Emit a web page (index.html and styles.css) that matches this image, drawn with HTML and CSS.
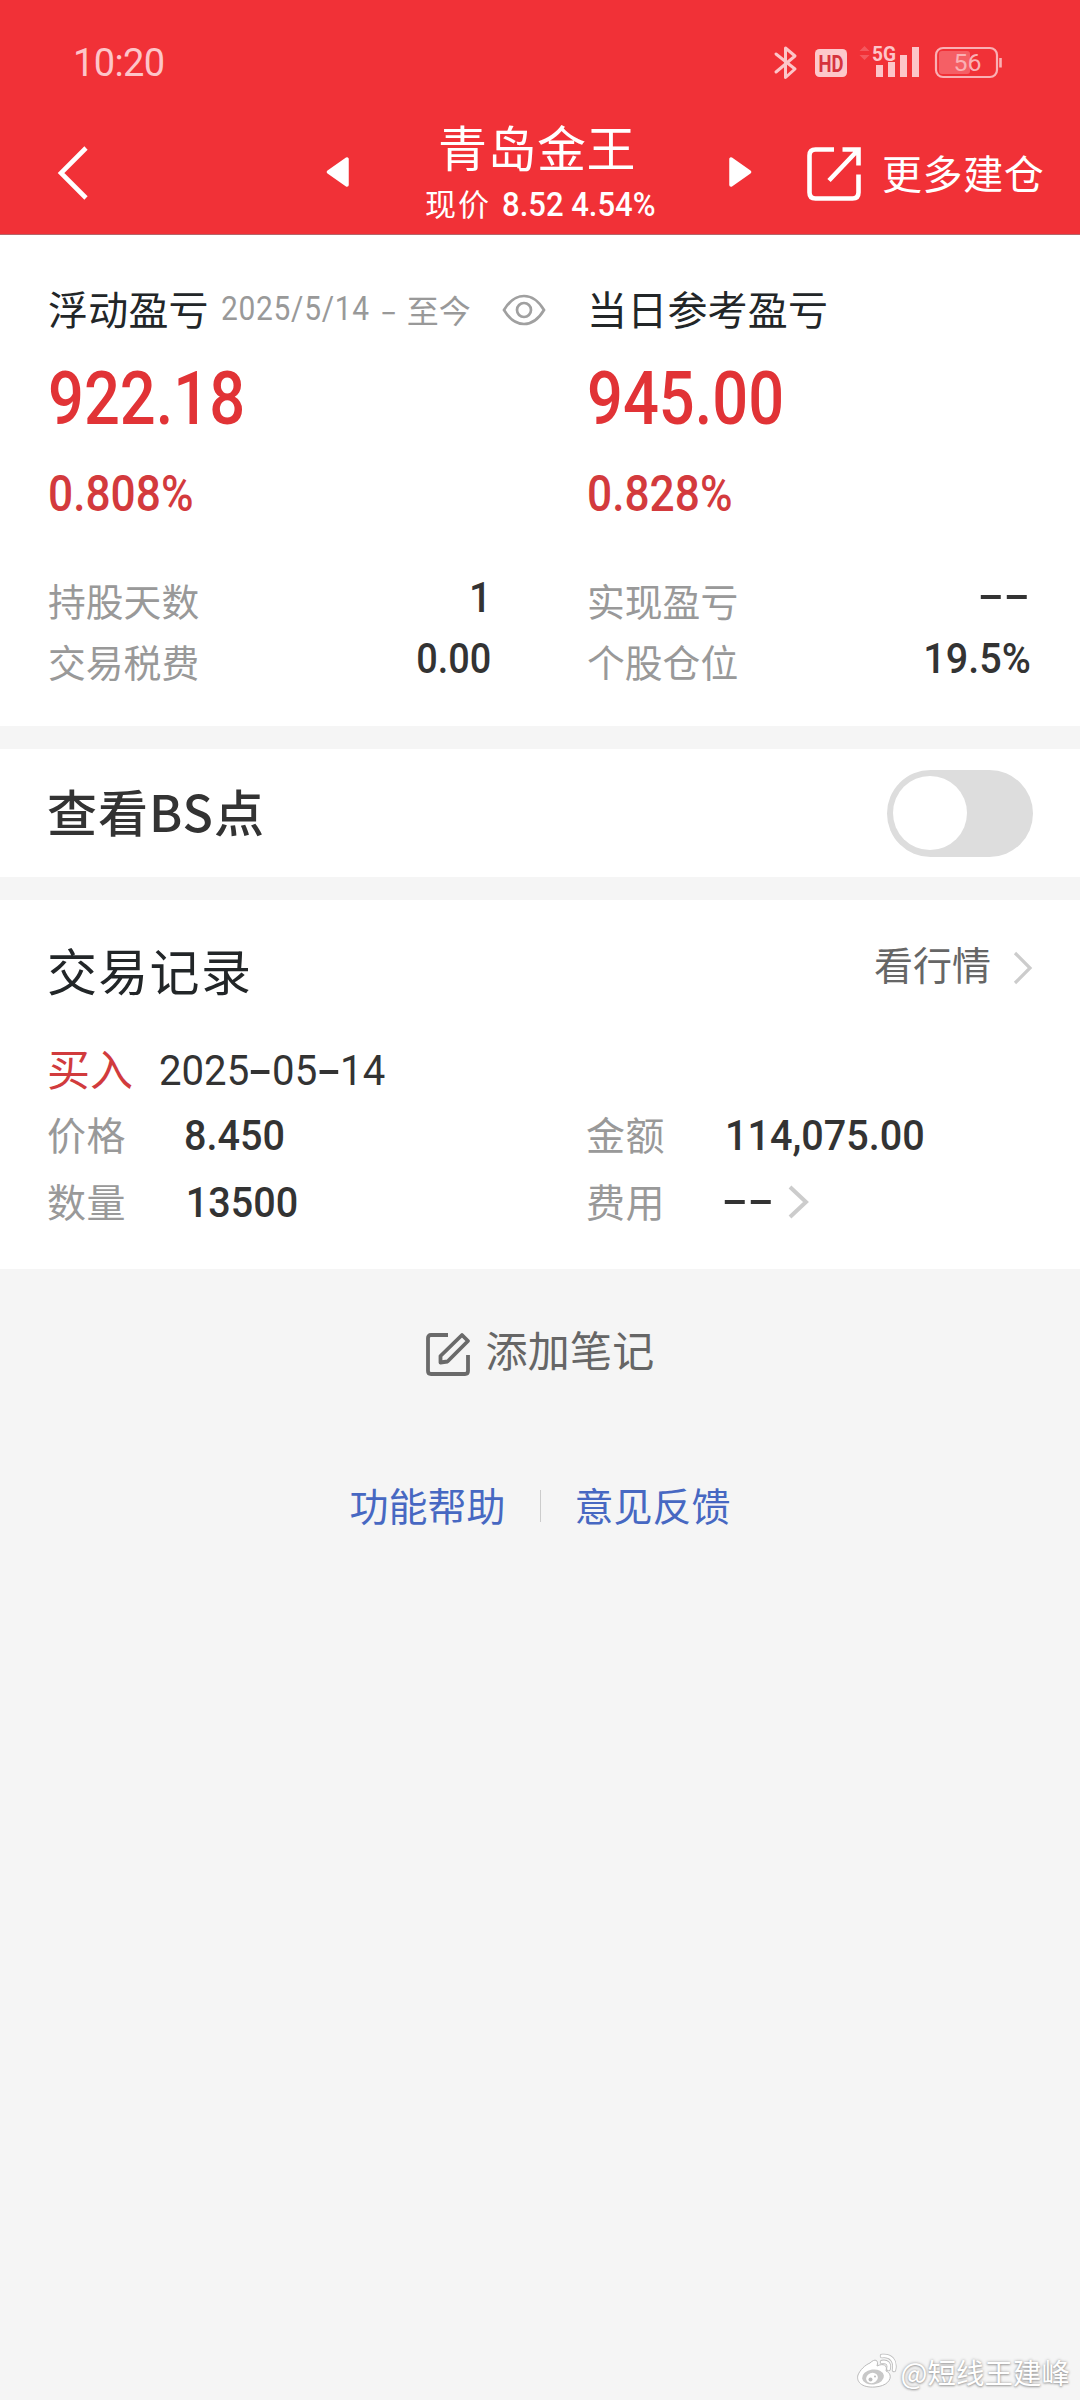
FILE: index.html
```html
<!DOCTYPE html>
<html lang="zh-CN">
<head>
<meta charset="utf-8">
<title>青岛金王</title>
<link rel="stylesheet" href="styles.css">
</head>
<body>
<main class="page">
  <header class="top">
    <div class="status">
      <span class="clock">10:20</span>
      <svg class="status-icons" width="240" height="44" viewBox="770 40 240 44">
        <path d="M776 54 L795 69 L785.5 77.500 V48 L795 56 L776 72" fill="none" stroke="#fcc6c9" stroke-width="3" stroke-linejoin="round" stroke-linecap="round"/>
        <rect x="815" y="49" width="32" height="28" rx="4.500" fill="#fdc8cb"/>
        <text class="hd" x="831" y="71.500" text-anchor="middle" textLength="25" lengthAdjust="spacingAndGlyphs">HD</text>
        <path d="M859.500 51 L864.500 46 L869.500 51 Z M859.500 55 L864.500 60 L869.500 55 Z" fill="#f4585e"/>
        <text class="net" x="872" y="60.500" textLength="24" lengthAdjust="spacingAndGlyphs">5G</text>
        <path d="M876 65h7v12h-7z M888 62h7v15h-7z M900 55h7v22h-7z M912 47h7v30h-7z" fill="#fdc5c9"/>
        <rect x="939" y="51" width="31" height="23" rx="3" fill="#f55f65"/>
        <rect x="936" y="48" width="61" height="29" rx="7" fill="none" stroke="#fab0b4" stroke-width="2.200"/>
        <path d="M1000.500 58v9.500" stroke="#fab0b4" stroke-width="2.600"/>
        <text class="battery" x="967.500" y="71" text-anchor="middle" textLength="28" lengthAdjust="spacingAndGlyphs">56</text>
      </svg>
    </div>
    <nav class="nav">
      <svg class="back" width="34" height="56" viewBox="0 0 34 56"><path d="M30 3 L5 28 L30 53" fill="none" stroke="#fff" stroke-width="4.600"/></svg>
      <svg class="prev" width="24" height="30" viewBox="0 0 24 30"><path d="M21 2 V28 L2.500 15 Z" fill="#fff" stroke="#fff" stroke-width="3.500" stroke-linejoin="round"/></svg>
      <div class="stock">
        <h1 class="stock-name">青岛金王</h1>
        <p class="quote"><span>现价</span><span class="num quote-num">8.52 4.54%</span></p>
      </div>
      <svg class="next" width="24" height="30" viewBox="0 0 24 30"><path d="M3 2 V28 L21.500 15 Z" fill="#fff" stroke="#fff" stroke-width="3.500" stroke-linejoin="round"/></svg>
      <a class="more">
        <svg width="54" height="56" viewBox="0 0 54 56" fill="none" stroke="#fff" stroke-width="4.600"><path d="M27 3.500 H8.500 Q2.500 3.500 2.500 9.500 V46.500 Q2.500 52.500 8.500 52.500 H45.500 Q51.500 52.500 51.500 46.500 V28.500 M35.500 3.500 H51.500 V19.500 M51 4 L22 34.500"/></svg>
        <span>更多建仓</span>
      </a>
    </nav>
  </header>

  <section class="card summary">
    <div class="col">
      <div class="heading">
        <span>浮动盈亏</span>
        <span class="range"><span class="num range-date">2025/5/14</span><i class="range-dash">-</i><span>至今</span></span>
        <svg class="eye" width="44" height="32" viewBox="0 0 44 32" fill="none" stroke="#a0a0a0" stroke-width="2.700"><path d="M2 16 C8 6 14 2 22 2 S36 6 42 16 C36 26 30 30 22 30 S8 26 2 16 Z"/><circle cx="22" cy="16" r="7"/></svg>
      </div>
      <div class="big num">922.18</div>
      <div class="percent num">0.808%</div>
      <div class="row"><span>持股天数</span><span class="value num">1</span></div>
      <div class="row"><span>交易税费</span><span class="value num s88">0.00</span></div>
    </div>
    <div class="col">
      <div class="heading"><span>当日参考盈亏</span></div>
      <div class="big num">945.00</div>
      <div class="percent num">0.828%</div>
      <div class="row"><span>实现盈亏</span><span class="value none"><i>-</i><i>-</i></span></div>
      <div class="row"><span>个股仓位</span><span class="value num">19.5%</span></div>
    </div>
  </section>

  <section class="card bs">
    <h2>查看BS点</h2>
    <span class="toggle"><span class="knob"></span></span>
  </section>

  <section class="card records">
    <div class="records-head">
      <h2>交易记录</h2>
      <a class="market"><span>看行情</span><svg width="20" height="34" viewBox="0 0 20 34"><path d="M2 2 L17 17 L2 32" fill="none" stroke="#ccc" stroke-width="3.200"/></svg></a>
    </div>
    <div class="trade"><span class="buy">买入</span><span class="date num">2025<i>-</i>05<i>-</i>14</span></div>
    <div class="details">
      <span>价格</span><span class="num detail">8.450</span>
      <span>金额</span><span class="num detail">114,075.00</span>
      <span>数量</span><span class="num detail quantity">13500</span>
      <span>费用</span><span class="fee"><span class="none"><i>-</i><i>-</i></span><svg width="22" height="34" viewBox="0 0 22 34"><path d="M2 2 L18 17 L2 32" fill="none" stroke="#ccc" stroke-width="4"/></svg></span>
    </div>
  </section>

  <a class="note">
    <svg width="46" height="46" viewBox="0 0 46 46" fill="none" stroke="#6a6a6a" stroke-width="3.800"><path d="M23 3 H6 Q3 3 3 6 V39 Q3 42 6 42 H40 Q43 42 43 39 V23"/><path d="M15.500 30.500 V24 L37 3 L43 9 L22.500 29.500 Z" stroke-linejoin="round"/></svg>
    <span>添加笔记</span>
  </a>
  <footer class="links"><a>功能帮助</a><span class="divider"></span><a>意见反馈</a></footer>

  <div class="watermark">
    <svg width="42" height="38" viewBox="0 0 42 38">
      <path d="M14 10 C19 5 23 7 21 13 C27 10 32 12 30 18 C38 21 35 33 19 34 C5 35 0 28 2 22 C4 17 9 12 14 10 Z" fill="#fff" stroke="#bbb"/>
      <ellipse cx="17" cy="24" rx="11" ry="7.500" fill="#c8c8c8" transform="rotate(-8 17 24)"/>
      <ellipse cx="16" cy="25" rx="6" ry="5" fill="#fff" transform="rotate(-20 16 25)"/>
      <circle cx="14.500" cy="26.500" r="2" fill="#bbb"/><circle cx="19" cy="23.500" r="1" fill="#bbb"/>
      <path d="M26 3 C35 2 40 8 38 17 M26 9 C31 8 34 11 32.500 16" fill="none" stroke="#bbb" stroke-width="4.400" stroke-linecap="round"/>
      <path d="M26 3 C35 2 40 8 38 17 M26 9 C31 8 34 11 32.500 16" fill="none" stroke="#fff" stroke-width="2.800" stroke-linecap="round"/>
    </svg>
    <span>@短线王建峰</span>
  </div>
</main>
</body>
</html>
```
FILE: styles.css
```css
* { box-sizing: border-box; margin: 0; padding: 0; }
body { background: #f5f5f5; }
i { font-style: normal; }
svg { display: block; flex: none; }
h1, h2 { font-weight: 400; }

.page {
  position: relative;
  display: flex;
  flex-direction: column;
  width: 1080px;
  height: 2400px;
  overflow: hidden;
  background: #f5f5f5;
  font-family: "Noto Sans CJK SC", sans-serif;
  color: #333;
  white-space: nowrap;
}
.num {
  display: inline-block;
  font-family: Roboto, sans-serif;
  font-weight: 500;
  transform-origin: left center;
}

/* header */
.top { height: 235px; border-bottom: 1px solid #b5666a; background: #f13137; color: #fff; }
.status { display: flex; justify-content: space-between; height: 84px; padding: 40px 70px 0 73px; }
.clock {
  font: 400 38px/46px Roboto, sans-serif;
  letter-spacing: -0.6px;
  color: #fdc5c9;
}
.hd { font: 700 23px Roboto, sans-serif; fill: #d6333d; }
.net { font: 700 21px Roboto, sans-serif; fill: #fdc5c9; }
.battery { font: 400 24px Roboto, sans-serif; fill: #fab0b4; }
.nav { display: flex; align-items: flex-start; height: 150px; padding-left: 56px; }
.back { margin-top: 61px; }
.prev { margin: 73px 0 0 236px; }
.stock { width: 230px; margin: 28px 0 0 75px; }
.stock-name {
  padding-left: 13px;
  font-size: 49px;
  line-height: 68px;
  letter-spacing: .5px;
}
.quote { display: flex; height: 50px; font-size: 31px; line-height: 46px; letter-spacing: 2px; }
.quote-num { margin-left: 11px; font-size: 33px; line-height: 50px; letter-spacing: 0; transform: scaleX(.94); }
.next { margin: 73px 0 0 73px; }
.more { display: flex; align-items: center; gap: 21px; margin: 61px 0 0 55px; font-size: 40px; line-height: 54px; }
.more span { padding-bottom: 4px; letter-spacing: .6px; }

/* profit summary */
.card { background: #fff; }
.summary {
  display: grid;
  grid-template-columns: 443px 444px;
  column-gap: 96px;
  height: 491px;
  padding: 45px 48px 0;
}
.col { display: flex; flex-direction: column; }
.heading { display: flex; align-items: center; height: 56px; font-size: 40px; letter-spacing: .2px; color: #222628; }
.range { display: flex; align-items: center; width: 250px; margin-left: 12px; font-size: 32px; line-height: 56px; letter-spacing: 0; color: #999; }
.range span:last-child { padding-top: 2px; }
.range-date { width: 149px; font-size: 34px; font-weight: 400; line-height: 60px; letter-spacing: .8px; transform: scaleX(.88); }
.range-dash { width: 38px; padding-bottom: 1px; text-align: center; transform: scaleX(1.500); }
.eye { margin: 4px 0 0 31px; }
.big { margin-top: 22px; font-size: 75px; line-height: 80px; color: #e13336; transform: scaleX(.843); }
.percent { margin-top: 25px; font-size: 50px; line-height: 62px; color: #d33a3d; transform: scaleX(.885); }
.percent + .row { margin-top: 45px; }
.row { display: flex; justify-content: space-between; height: 61px; font-size: 37.800px; line-height: 60px; color: #999; }
.value { font-size: 43px; line-height: 54px; color: #333; transform: scaleX(.92); transform-origin: right center; }
.s88 { transform: scaleX(.88); }
.none { display: flex; gap: 8px; }
.none i, .date i {
  display: inline-block;
  width: 18px;
  text-align: center;
  font-family: Roboto, sans-serif;
  font-weight: 500;
  transform: scaleX(1.800);
}
.value.none { padding-right: 5px; transform: none; line-height: 50px; }

/* chart markers switch */
.bs { display: flex; align-items: center; justify-content: space-between; height: 128px; margin-top: 23px; padding: 0 47px 0 47px; }
.bs h2 { padding-bottom: 6px; font-size: 50px; font-weight: 500; letter-spacing: 1px; }
.toggle { display: flex; align-items: center; width: 146px; height: 87px; padding-left: 6px; border-radius: 44px; background: #ddd; }
.knob { width: 74px; height: 74px; border-radius: 50%; background: #fff; }

/* trade records */
.records { height: 369px; margin-top: 23px; padding: 40px 47px 0 47px; }
.records-head { display: flex; justify-content: space-between; height: 58px; }
.records-head h2 { font-size: 50px; line-height: 58px; letter-spacing: 1.300px; color: #222628; }
.market { display: flex; align-items: flex-start; gap: 22px; font-size: 39px; line-height: 46px; color: #666; }
.market svg { margin-top: 11px; }
.trade { display: flex; height: 65px; margin-top: 37px; line-height: 65px; }
.buy { width: 112px; font-size: 43px; color: #d13b3d; }
.date { font-size: 42px; font-weight: 400; line-height: 71px; transform: scaleX(.955); }
.date i { width: 24px; }
.details { display: grid; grid-template-columns: 137px 402px 139px 1fr; grid-auto-rows: 67px; font-size: 39px; line-height: 67px; letter-spacing: .4px; color: #999; }
.detail { font-size: 43px; line-height: 70px; letter-spacing: 0; color: #333; transform: scaleX(.92); }
.quantity { padding-left: 2px; }
.fee { display: flex; align-items: center; gap: 18px; font-size: 43px; letter-spacing: 0; color: #333; }
.fee svg { margin-top: 2px; }
.fee .none { padding-left: 1px; }

/* page actions */
.note { display: flex; align-items: center; justify-content: center; gap: 14px; height: 60px; margin-top: 49px; font-size: 42px; letter-spacing: .3px; color: #666; }
.note svg { margin-top: 13px; }
.links { display: flex; align-items: center; justify-content: center; height: 60px; margin-top: 96px; font-size: 39px; color: #4768c2; }
.divider { width: 1px; height: 32px; margin: 4px 34px 0; background: #ccc; }

.watermark {
  position: absolute;
  right: 10px;
  bottom: 8px;
  display: flex;
  align-items: center;
  gap: 3px;
  font-size: 28.500px;
  line-height: 40px;
  color: #fff;
  text-shadow: 0 0 3px #999, 0 1px 2px #aaa;
}
```
